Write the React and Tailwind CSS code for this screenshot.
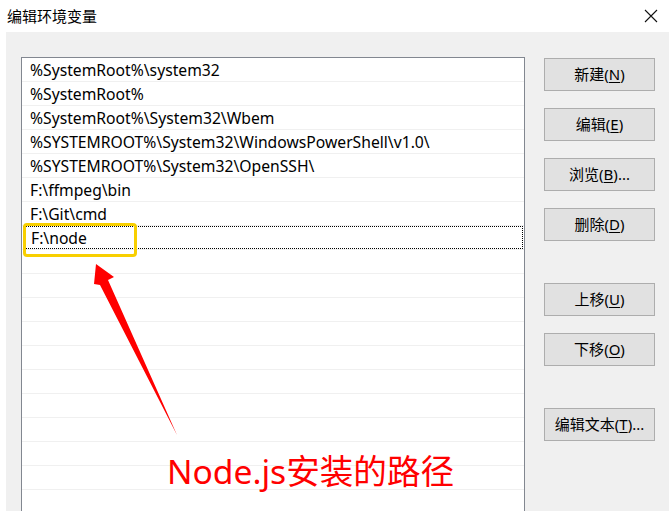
const paths = [
  '%SystemRoot%\\system32',
  '%SystemRoot%',
  '%SystemRoot%\\System32\\Wbem',
  '%SYSTEMROOT%\\System32\\WindowsPowerShell\\v1.0\\',
  '%SYSTEMROOT%\\System32\\OpenSSH\\',
  'F:\\ffmpeg\\bin',
  'F:\\Git\\cmd',
  'F:\\node',
];

const font = { fontFamily: '"Noto Sans", "Noto Sans CJK SC", sans-serif' };

function Btn({ label, hot, tail = '', className = '' }) {
  return (
    <button
      className={`w-[111px] h-[33px] bg-[#e1e1e1] border border-[#adadad] text-[15px] text-black leading-none flex items-center justify-center ${className}`}
    >
      {label}(<span className="underline underline-offset-2">{hot}</span>){tail}
    </button>
  );
}

export default function App() {
  const rows = [...paths, ...Array(14).fill('')];

  return (
    <div className="relative w-[669px] h-[511px] bg-white overflow-hidden flex flex-col" style={font}>
      {/* title bar */}
      <div className="h-[32px] flex items-center justify-between pl-[7px] pr-[10px] shrink-0">
        <span className="text-[15px] text-black">编辑环境变量</span>
        <svg width="14" height="14" viewBox="0 0 14 14" className="mr-[1px]">
          <path d="M1 1 L13 13 M13 1 L1 13" stroke="#111" strokeWidth="1.1" />
        </svg>
      </div>

      {/* client area */}
      <div className="flex-1 ml-[6px] bg-[#f0f0f0] flex items-start pt-[25px] pl-[15px] overflow-hidden">
        <div className="w-[504px] border border-[#828790] bg-white shrink-0">
          {rows.map((p, i) => (
            <div key={i} className="h-[24px] border-b border-[#f0f0f0] px-px">
              <div
                className={`h-full flex items-center pl-[7px] pt-[2px] text-[15.7px] text-black whitespace-nowrap ${
                  i === 7 ? 'border border-dotted border-black' : ''
                }`}
              >
                {p}
              </div>
            </div>
          ))}
        </div>

        <div className="ml-[19px] pt-px flex flex-col">
          <Btn label="新建" hot="N" />
          <Btn label="编辑" hot="E" className="mt-[17px]" />
          <Btn label="浏览" hot="B" tail="..." className="mt-[17px]" />
          <Btn label="删除" hot="D" className="mt-[17px]" />
          <Btn label="上移" hot="U" className="mt-[42px]" />
          <Btn label="下移" hot="O" className="mt-[17px]" />
          <Btn label="编辑文本" hot="T" tail="..." className="mt-[42px]" />
        </div>
      </div>

      {/* annotation */}
      <div className="absolute left-[23px] top-[223px] w-[114px] h-[34px] border-[3px] border-[#f8cf00] rounded-[4px]" />
      <svg className="absolute left-0 top-0 pointer-events-none" width="669" height="511">
        <polygon points="96,264 114,277 108,280 177,435 100,285 94,284" fill="#ff0000" />
      </svg>
      <div className="absolute left-[167px] top-[455px] text-[33.6px] leading-none text-[#ff0000]">
        Node.js安装的路径
      </div>
    </div>
  );
}
